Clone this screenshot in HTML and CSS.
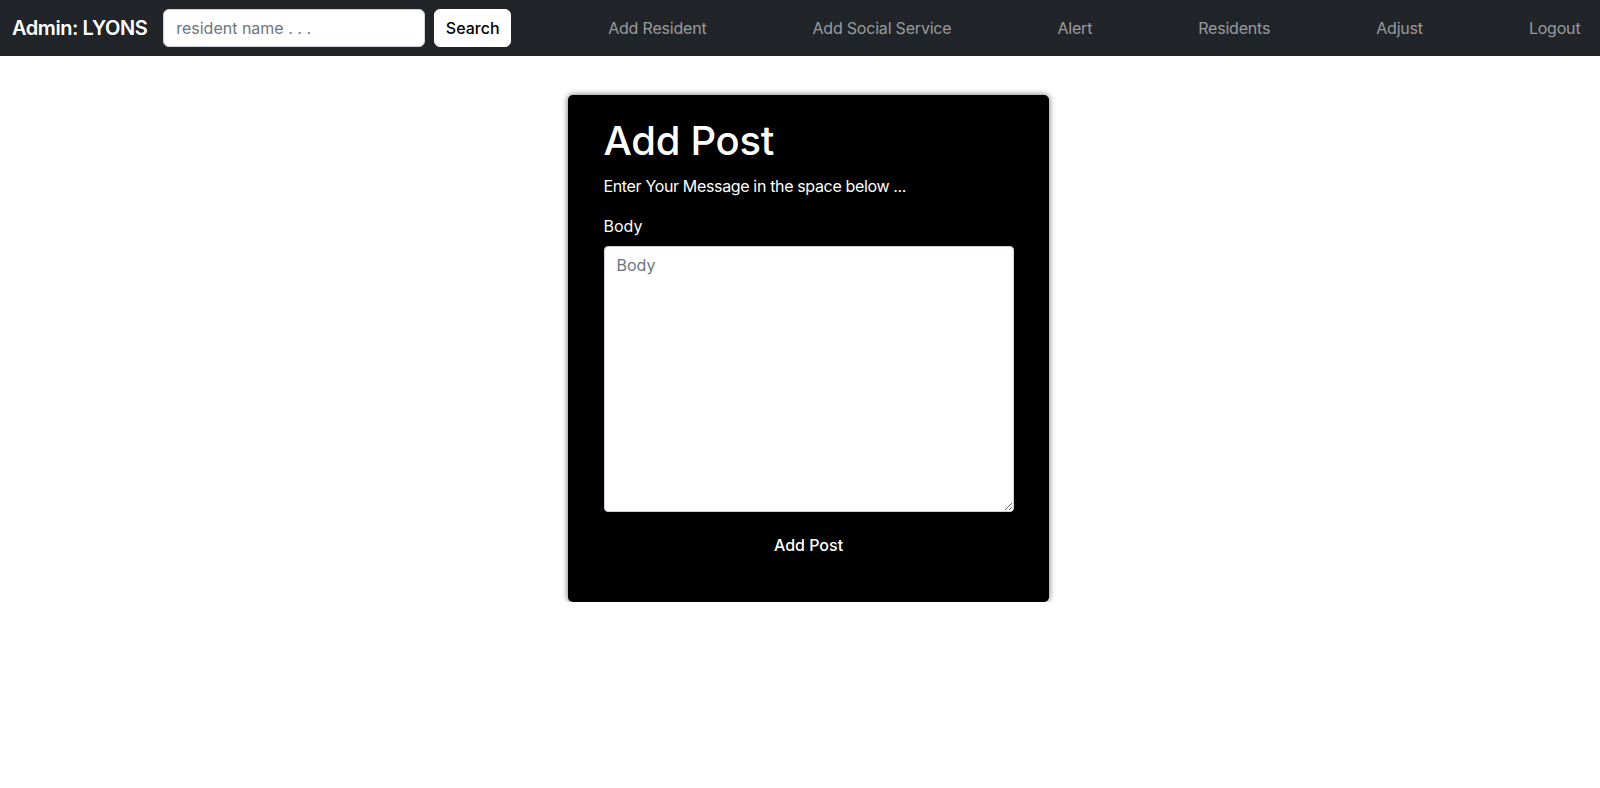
FILE: index.html
```html
<!DOCTYPE html>
<html lang="en">
<head>
<meta charset="utf-8">
<title>Add Post</title>
<link rel="stylesheet" href="styles.css">
</head>
<body>
<nav class="navbar">
  <a class="brand" href="#">Admin: LYONS</a>
  <form class="search">
    <input class="search-input" type="text" placeholder="resident name . . .">
    <button class="search-btn" type="button">Search</button>
  </form>
  <ul class="links">
    <li><a href="#">Add Resident</a></li>
    <li><a href="#">Add Social Service</a></li>
    <li><a href="#">Alert</a></li>
    <li><a href="#">Residents</a></li>
    <li><a href="#">Adjust</a></li>
    <li><a href="#">Logout</a></li>
  </ul>
</nav>
<main class="main">
  <section class="card">
    <h1 class="title">Add Post</h1>
    <p class="lead">Enter Your Message in the space below ...</p>
    <label class="label" for="body">Body</label>
    <textarea id="body" class="body-input" placeholder="Body"></textarea>
    <div class="actions"><button class="submit" type="button">Add Post</button></div>
  </section>
</main>
</body>
</html>
```
FILE: styles.css
```css
* { box-sizing: border-box; }
body {
  margin: 0;
  font-family: Inter, "Noto Sans", sans-serif;
  background: #fff;
  color: #212529;
}
.navbar {
  height: 56px;
  background: #212529;
  display: flex;
  align-items: center;
  padding: 0 12px;
  white-space: nowrap;
}
.brand {
  color: #fff;
  text-decoration: none;
  font-size: 20px;
  font-weight: 600;
  margin-right: 16px;
  letter-spacing: -0.45px;
  flex-shrink: 0;
}
.search { display: flex; align-items: center; flex-shrink: 0; }
.search-input {
  width: 262px;
  height: 38px;
  border: 1px solid #ced4da;
  border-radius: 6px;
  padding: 0 12px;
  font-family: inherit;
  font-size: 16px;
  margin-right: 9px;
}
.search-input::placeholder { color: #6c757d; }
.search-btn {
  width: 77px;
  height: 38px;
  border: 1px solid #fff;
  border-radius: 6px;
  background: #fff;
  font-family: inherit;
  font-size: 16px;
  font-weight: 500;
  color: #000;
}
.links {
  list-style: none;
  margin: 0 0 0 97px;
  padding: 0;
  display: flex;
  gap: 106px;
  flex-shrink: 0;
}
.links a {
  color: rgba(255,255,255,0.55);
  text-decoration: none;
  font-size: 16px;
  letter-spacing: -0.2px;
}
.main { display: flex; justify-content: center; padding: 39px 0 0 16px; }
.card {
  width: 481px;
  height: 507px;
  background: #000;
  border-radius: 5px;
  box-shadow: 0 0 6px rgba(0,0,0,0.6);
  padding: 22px 35px 0 36px;
  color: #fff;
  display: flex;
  flex-direction: column;
}
.title {
  margin: 0;
  font-size: 40px;
  font-weight: 500;
  line-height: 1.2;
  letter-spacing: -0.3px;
}
.lead { margin: 9px 0 0; font-size: 16px; line-height: 24px; letter-spacing: -0.35px; }
.label { margin-top: 16px; font-size: 16px; line-height: 24px; }
.body-input {
  margin-top: 8px;
  width: 100%;
  height: 266px;
  border: 1px solid #ced4da;
  border-radius: 4px;
  padding: 6px 12px;
  font-family: inherit;
  font-size: 16px;
  line-height: 24px;
}
.body-input::placeholder { color: #6c757d; }
.actions { display: flex; justify-content: center; margin-top: 17px; }
.submit {
  background: transparent;
  border: 0;
  color: #fff;
  font-family: inherit;
  font-size: 16px;
  font-weight: 500;
  padding: 6px 12px;
}
```
